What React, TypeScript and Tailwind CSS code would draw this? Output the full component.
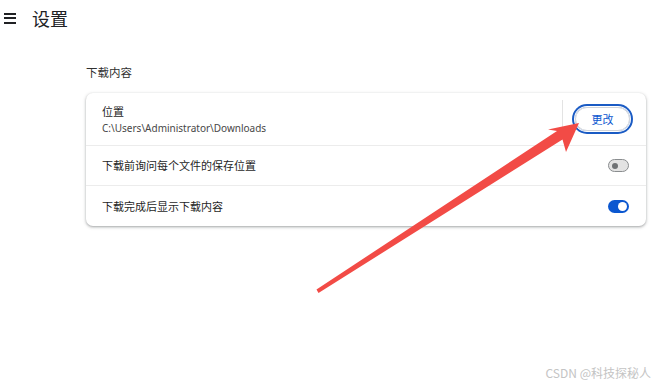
import React from "react";

const cjk = { fontFamily: '"Noto Sans CJK SC", "Noto Sans", sans-serif' };
const latin = { fontFamily: '"Noto Sans", "Noto Sans CJK SC", sans-serif' };

function Toggle({ on }: { on: boolean }) {
  if (on) {
    return (
      <div className="flex h-[13px] w-[21px] items-center justify-end rounded-full bg-[#0b57d0] pr-[2px]">
        <div className="h-[9px] w-[9px] rounded-full bg-white" />
      </div>
    );
  }
  return (
    <div className="flex h-[13px] w-[21px] items-center rounded-full border border-[#8a8d8f] bg-[#e3e3e3] pl-[3px]">
      <div className="h-[6px] w-[6px] rounded-full bg-[#6f7274]" />
    </div>
  );
}

export default function App() {
  return (
    <div className="relative h-[388px] w-[659px] overflow-hidden bg-white text-[#1f1f1f]" style={cjk}>
      {/* header */}
      <div className="flex h-[36px] items-center">
        <div className="ml-[4px] flex w-[12px] flex-col gap-[2.5px]">
          <div className="h-[2px] bg-[#202124]" />
          <div className="h-[2px] bg-[#202124]" />
          <div className="h-[2px] bg-[#202124]" />
        </div>
        <div className="ml-[16px] text-[18px] leading-none text-[#202124]">设置</div>
      </div>

      {/* section */}
      <div className="ml-[86px] w-[560px]">
        <div className="mt-[28px] text-[11.5px] leading-[16px] text-[#303030]">下载内容</div>
        <div className="mt-[13px] rounded-[7px] bg-white shadow-[0_1px_2px_rgba(60,64,67,0.3),0_1px_3px_1px_rgba(60,64,67,0.15)]">
          {/* row 1 */}
          <div className="flex h-[53px] items-center border-b border-[#ececec] pl-[16px] pr-[16px]">
            <div className="flex flex-1 flex-col">
              <div className="text-[11px] leading-[15px] text-[#1f1f1f]">位置</div>
              <div className="mt-[2px] text-[10px] leading-[14px] text-[#474747]" style={latin}>
                C:\Users\Administrator\Downloads
              </div>
            </div>
            <div className="h-[38px] w-px bg-[#e3e3e3]" />
            <div className="ml-[12px] flex h-[24px] w-[55px] items-center justify-center rounded-full border border-[#d0d4da] text-[11px] text-[#0b57d0] ring-2 ring-[#1a5bc4] ring-offset-1">
              更改
            </div>
          </div>
          {/* row 2 */}
          <div className="flex h-[40px] items-center border-b border-[#ececec] pl-[16px] pr-[17px]">
            <div className="flex-1 text-[11px] text-[#1f1f1f]">下载前询问每个文件的保存位置</div>
            <Toggle on={false} />
          </div>
          {/* row 3 */}
          <div className="flex h-[40px] items-center pl-[16px] pr-[17px]">
            <div className="flex-1 text-[11px] text-[#1f1f1f]">下载完成后显示下载内容</div>
            <Toggle on={true} />
          </div>
        </div>
      </div>

      {/* annotation arrow */}
      <svg className="pointer-events-none absolute left-0 top-0" width="659" height="388" viewBox="0 0 659 388">
        <polygon
          points="579,123 566,152 562.5,139.5 318.5,293 316.5,289.5 557,131 548,129.5"
          fill="#f24b46"
        />
      </svg>

      {/* watermark */}
      <div className="absolute right-[8px] bottom-[9px] text-[12px] leading-none text-[#c4c4c4]">
        CSDN @科技探秘人
      </div>
    </div>
  );
}
